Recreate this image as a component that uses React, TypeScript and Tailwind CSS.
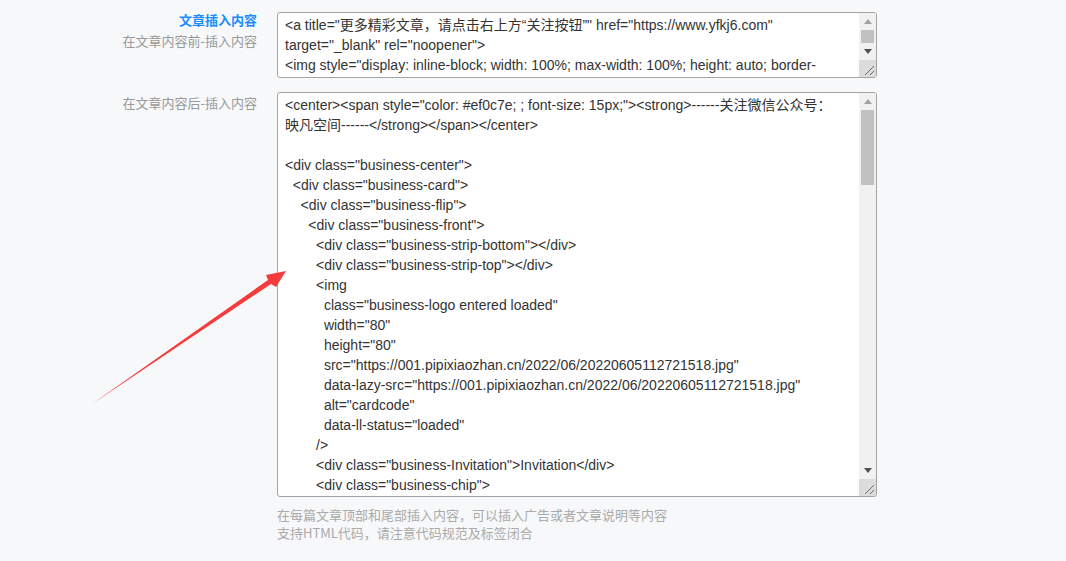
import React from 'react';

const FONT = '"Liberation Sans", "Noto Sans CJK SC", sans-serif';
const CJK = '"Noto Sans CJK SC", "Liberation Sans", sans-serif';

const BEFORE_LINES = [
  '<a title="更多精彩文章，请点击右上方“关注按钮”" href="https://www.yfkj6.com"',
  'target="_blank" rel="noopener">',
  '<img style="display: inline-block; width: 100%; max-width: 100%; height: auto; border-',
  'radius: 6px;" src="https://001.pipixiaozhan.cn/2022/06/follow.gif" alt="关注" /></a>',
];

const AFTER_LINES = [
  '<center><span style="color: #ef0c7e; ; font-size: 15px;"><strong>------关注微信公众号：',
  '映凡空间------</strong></span></center>',
  '',
  '<div class="business-center">',
  '  <div class="business-card">',
  '    <div class="business-flip">',
  '      <div class="business-front">',
  '        <div class="business-strip-bottom"></div>',
  '        <div class="business-strip-top"></div>',
  '        <img',
  '          class="business-logo entered loaded"',
  '          width="80"',
  '          height="80"',
  '          src="https://001.pipixiaozhan.cn/2022/06/20220605112721518.jpg"',
  '          data-lazy-src="https://001.pipixiaozhan.cn/2022/06/20220605112721518.jpg"',
  '          alt="cardcode"',
  '          data-ll-status="loaded"',
  '        />',
  '        <div class="business-Invitation">Invitation</div>',
  '        <div class="business-chip">',
  '          <div class="business-chip-line"></div>',
  '          <div class="business-chip-line"></div>',
];

function Arrow({ up, dark }: { up?: boolean; dark?: boolean }) {
  return (
    <div className="flex h-[17px] w-[17px] items-center justify-center">
      <svg width="8" height="5" viewBox="0 0 8 5">
        <polygon
          points={up ? '4,0 8,5 0,5' : '0,0 8,0 4,5'}
          fill={dark ? '#505050' : '#a3a3a3'}
        />
      </svg>
    </div>
  );
}

function Scrollbar({ thumb }: { thumb: number }) {
  return (
    <div className="flex w-[17px] shrink-0 flex-col bg-[#f1f1f1]">
      <div className="flex flex-1 flex-col">
        <Arrow up />
        <div className="flex flex-1 flex-col items-center">
          <div className="w-[13px] bg-[#c1c1c1]" style={{ height: thumb }} />
        </div>
        <Arrow dark />
      </div>
      <div className="flex h-[17px] w-[17px] items-end justify-end bg-[#dcdcdc]">
        <svg width="17" height="17" viewBox="0 0 17 17">
          <line x1="15" y1="6" x2="6" y2="15" stroke="#6b6b6b" strokeWidth="1" />
          <line x1="15" y1="11" x2="11" y2="15" stroke="#6b6b6b" strokeWidth="1" />
        </svg>
      </div>
    </div>
  );
}

function CodeBox({ lines, height, thumb }: { lines: string[]; height: number; thumb: number }) {
  return (
    <div
      className="flex w-[600px] overflow-hidden rounded-[3px] border border-[#a3a3a3] bg-white"
      style={{ height }}
    >
      <div
        className="flex-1 overflow-hidden whitespace-pre pl-[7px] pt-[2px] text-[14px] leading-[20px] text-[#333]"
        style={{ fontFamily: FONT }}
      >
        {lines.map((l, i) => (
          <div key={i} className="h-[20px]">
            {l}
          </div>
        ))}
      </div>
      <Scrollbar thumb={thumb} />
    </div>
  );
}

export default function App() {
  return (
    <div className="relative h-[561px] w-full overflow-hidden bg-[#f7f8fa]" style={{ fontFamily: CJK }}>
      <div className="flex flex-col pt-[12px]">
        <div className="flex items-start gap-[20px]">
          <div className="-mt-[3px] w-[257px] shrink-0 text-right text-[13px] leading-[21px]">
            <div className="font-bold text-[#1a8cff]">文章插入内容</div>
            <div className="text-[#999]">在文章内容前-插入内容</div>
          </div>
          <CodeBox lines={BEFORE_LINES} height={66} thumb={13} />
        </div>
        <div className="mt-[14px] flex items-start gap-[20px]">
          <div className="w-[257px] shrink-0 text-right text-[13px] leading-[21px] text-[#999]">
            在文章内容后-插入内容
          </div>
          <div className="flex flex-col">
            <CodeBox lines={AFTER_LINES} height={405} thumb={75} />
            <div className="mt-[9px] text-[13px] leading-[18px] text-[#aaa]">
              <div>在每篇文章顶部和尾部插入内容，可以插入广告或者文章说明等内容</div>
              <div>支持HTML代码，请注意代码规范及标签闭合</div>
            </div>
          </div>
        </div>
      </div>
      <svg className="pointer-events-none absolute left-0 top-0" width="1066" height="561">
        <polygon
          points="92,404 268,280 266,275 286,271 276,287 271,284"
          fill="#f53b3b"
        />
      </svg>
    </div>
  );
}
